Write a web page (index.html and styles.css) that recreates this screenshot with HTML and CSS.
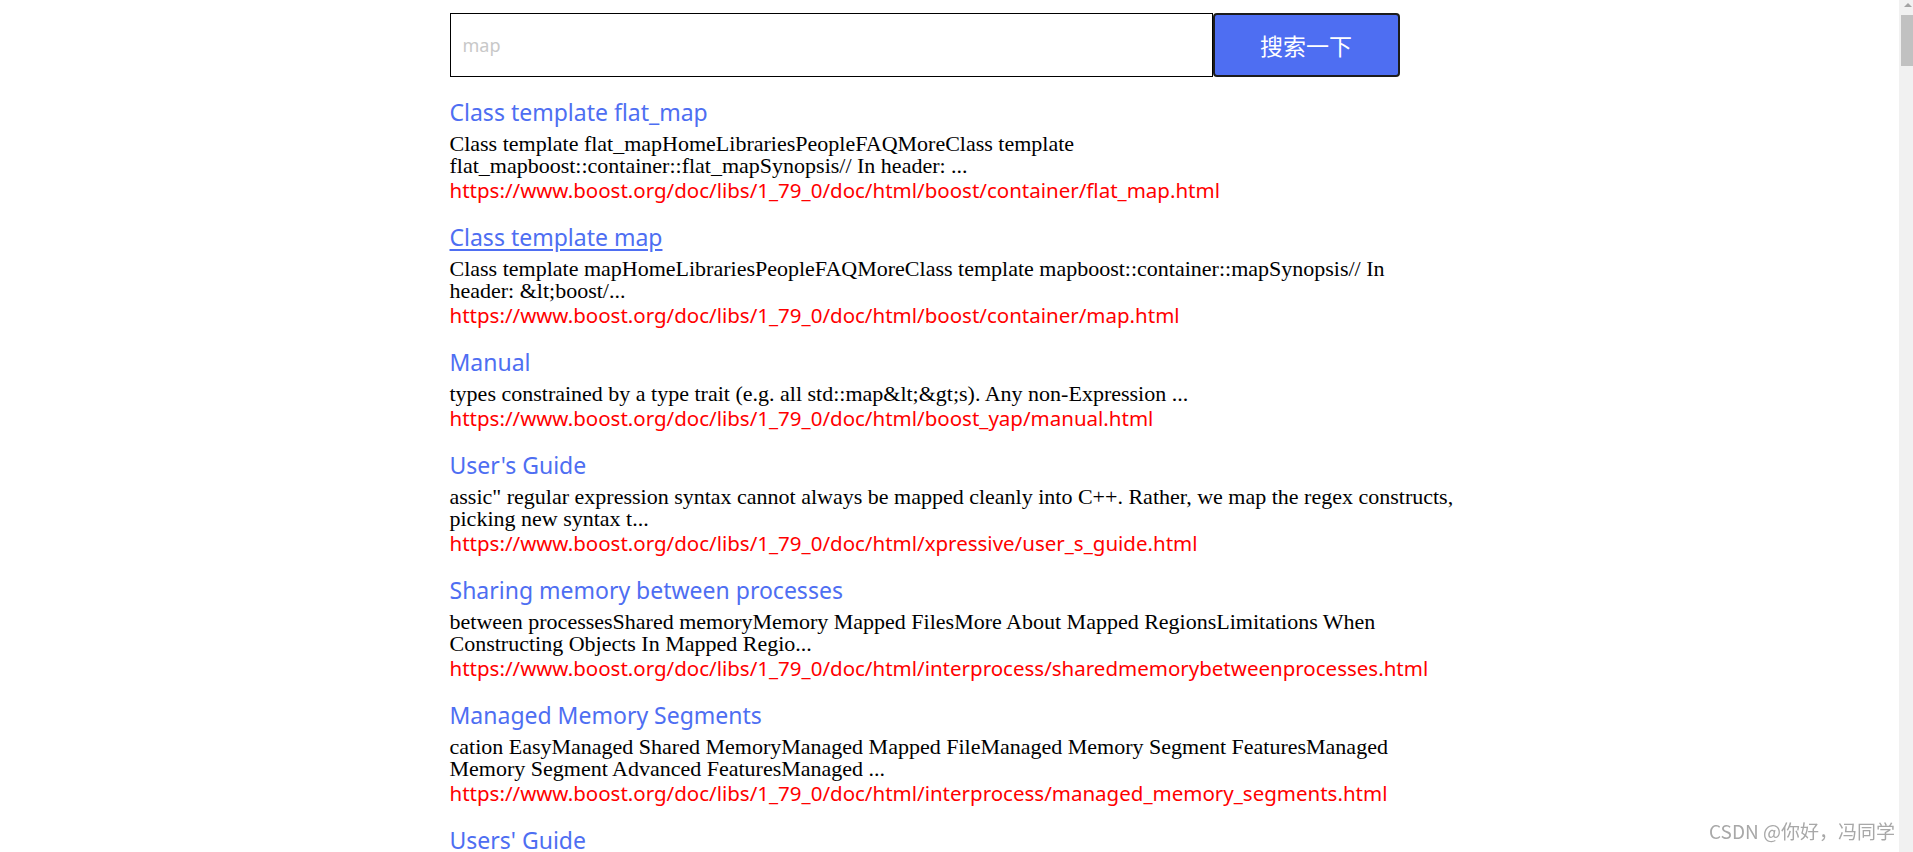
FILE: index.html
```html
<!DOCTYPE html>
<html lang="zh-CN">
<head>
<meta charset="utf-8">
<title>boost 搜索引擎</title>
<link rel="stylesheet" href="styles.css">
</head>
<body>
<div class="container">
  <div class="search">
    <input class="search-input" type="text" placeholder="map">
    <button class="search-btn">搜索一下</button>
  </div>
  <div class="result">
    <div class="item">
      <a class="title" href="#">Class template flat_map</a>
      <p class="desc">Class template flat_mapHomeLibrariesPeopleFAQMoreClass template<br>flat_mapboost::container::flat_mapSynopsis// In header: ...</p>
      <i class="url">https://www.boost.org/doc/libs/1_79_0/doc/html/boost/container/flat_map.html</i>
    </div>
    <div class="item">
      <a class="title hover" href="#">Class template map</a>
      <p class="desc">Class template mapHomeLibrariesPeopleFAQMoreClass template mapboost::container::mapSynopsis// In<br>header: &amp;lt;boost/...</p>
      <i class="url">https://www.boost.org/doc/libs/1_79_0/doc/html/boost/container/map.html</i>
    </div>
    <div class="item">
      <a class="title" href="#">Manual</a>
      <p class="desc">types constrained by a type trait (e.g. all std::map&amp;lt;&amp;gt;s). Any non-Expression ...</p>
      <i class="url">https://www.boost.org/doc/libs/1_79_0/doc/html/boost_yap/manual.html</i>
    </div>
    <div class="item">
      <a class="title" href="#">User's Guide</a>
      <p class="desc">assic" regular expression syntax cannot always be mapped cleanly into C++. Rather, we map the regex constructs,<br>picking new syntax t...</p>
      <i class="url">https://www.boost.org/doc/libs/1_79_0/doc/html/xpressive/user_s_guide.html</i>
    </div>
    <div class="item">
      <a class="title" href="#">Sharing memory between processes</a>
      <p class="desc">between processesShared memoryMemory Mapped FilesMore About Mapped RegionsLimitations When<br>Constructing Objects In Mapped Regio...</p>
      <i class="url">https://www.boost.org/doc/libs/1_79_0/doc/html/interprocess/sharedmemorybetweenprocesses.html</i>
    </div>
    <div class="item">
      <a class="title" href="#">Managed Memory Segments</a>
      <p class="desc">cation EasyManaged Shared MemoryManaged Mapped FileManaged Memory Segment FeaturesManaged<br>Memory Segment Advanced FeaturesManaged ...</p>
      <i class="url">https://www.boost.org/doc/libs/1_79_0/doc/html/interprocess/managed_memory_segments.html</i>
    </div>
    <div class="item">
      <a class="title" href="#">Users' Guide</a>
      <p class="desc">Users' Guide ...</p>
      <i class="url">https://www.boost.org/doc/libs/1_79_0/doc/html/</i>
    </div>
  </div>
</div>
<div class="watermark">CSDN @你好，冯同学</div>
<div class="scrollbar"><div class="arrow"></div><div class="thumb"></div></div>
</body>
</html>
```
FILE: styles.css
```css
html {
  overflow: hidden;
  height: 100%;
}
body {
  margin: 0 14px 0 0;
  background: #fff;
  font-family: "Noto Sans", "Noto Sans CJK SC", sans-serif;
}
.container {
  width: 1000px;
  margin: 0 auto;
  padding-top: 13px;
}
.search {
  display: flex;
  height: 64px;
}
.search-input {
  box-sizing: border-box;
  width: 763px;
  height: 64px;
  margin: 0;
  border: 1px solid #000;
  padding: 0 12px;
  font-family: "Noto Sans", sans-serif;
  font-size: 18px;
  color: #333;
  outline: none;
}
.search-input::placeholder {
  color: #c8c8c8;
}
.search-btn {
  box-sizing: border-box;
  width: 187px;
  height: 64px;
  margin: 0;
  border: 2px solid #1c1c1c;
  border-radius: 4px;
  background: #4e6ef2;
  color: #fff;
  font-family: "Noto Sans CJK SC", sans-serif;
  font-size: 23px;
  cursor: pointer;
}
.result {
  padding-top: 19px;
}
.item {
  margin-bottom: 20px;
}
.title {
  display: block;
  font-size: 23px;
  line-height: 32px;
  color: #4e6ef2;
  text-decoration: none;
}
.title.hover {
  text-decoration: underline;
  text-underline-offset: 3px;
}
.desc {
  margin: 5px 0 0;
  font-family: "Liberation Serif", serif;
  font-size: 22px;
  line-height: 22px;
  color: #000;
  white-space: nowrap;
}
.url {
  display: block;
  margin-top: 2px;
  font-style: normal;
  font-size: 20.5px;
  line-height: 22px;
  color: #f00;
}
.watermark {
  position: fixed;
  right: 18px;
  bottom: 8px;
  font-family: "Noto Sans CJK SC", sans-serif;
  font-size: 19px;
  color: #a8a8a8;
}
.scrollbar {
  position: fixed;
  top: 0;
  right: 0;
  width: 14px;
  height: 100%;
  background: #f1f1f1;
}
.arrow {
  position: absolute;
  top: 3px;
  left: 5px;
  width: 0;
  height: 0;
  border-left: 4px solid transparent;
  border-right: 4px solid transparent;
  border-bottom: 4px solid #a3a3a3;
}
.thumb {
  position: absolute;
  top: 15px;
  left: 2px;
  right: 0;
  height: 51px;
  background: #c1c1c1;
}
```
